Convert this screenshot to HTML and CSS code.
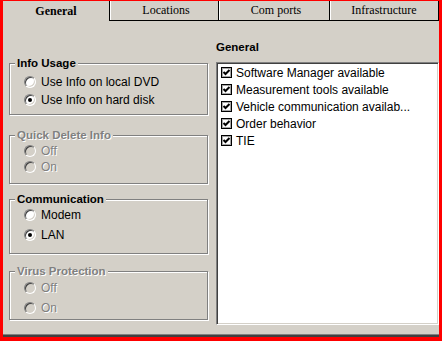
FILE: index.html
```html
<!DOCTYPE html>
<html lang="en">
<head>
    <meta charset="UTF-8">
    <title>Settings - General</title>
    <link rel="stylesheet" href="styles.css">
</head>
<body>
    <div class="frame">
        <div class="tabs">
            <div class="tab active">General</div>
            <div class="tab tab-loc">Locations</div>
            <div class="tab tab-com">Com ports</div>
            <div class="tab tab-infra">Infrastructure</div>
        </div>

        <div class="panel">
            <div class="col-left">
                <fieldset class="group group-info">
                    <legend>Info Usage</legend>
                    <label class="opt"><span class="radio"></span>Use Info on local DVD</label>
                    <label class="opt"><span class="radio checked"></span>Use Info on hard disk</label>
                </fieldset>

                <fieldset class="group group-quick disabled">
                    <legend>Quick Delete Info</legend>
                    <label class="opt"><span class="radio"></span>Off</label>
                    <label class="opt"><span class="radio"></span>On</label>
                </fieldset>

                <fieldset class="group group-comm">
                    <legend>Communication</legend>
                    <label class="opt"><span class="radio"></span>Modem</label>
                    <label class="opt"><span class="radio checked"></span>LAN</label>
                </fieldset>

                <fieldset class="group group-virus disabled">
                    <legend>Virus Protection</legend>
                    <label class="opt"><span class="radio"></span>Off</label>
                    <label class="opt"><span class="radio"></span>On</label>
                </fieldset>
            </div>

            <div class="col-right">
                <div class="list-title">General</div>
                <ul class="list">
                    <li><span class="check"><svg viewBox="0 0 9 9"><polyline points="1.5,4 3.5,6 7.5,2"/></svg></span>Software Manager available</li>
                    <li><span class="check"><svg viewBox="0 0 9 9"><polyline points="1.5,4 3.5,6 7.5,2"/></svg></span>Measurement tools available</li>
                    <li><span class="check"><svg viewBox="0 0 9 9"><polyline points="1.5,4 3.5,6 7.5,2"/></svg></span>Vehicle communication availab...</li>
                    <li><span class="check"><svg viewBox="0 0 9 9"><polyline points="1.5,4 3.5,6 7.5,2"/></svg></span>Order behavior</li>
                    <li><span class="check"><svg viewBox="0 0 9 9"><polyline points="1.5,4 3.5,6 7.5,2"/></svg></span>TIE</li>
                </ul>
            </div>
        </div>
    </div>
</body>
</html>
```

FILE: styles.css
```css
* {
    margin: 0;
    padding: 0;
    box-sizing: border-box;
}

html, body {
    width: 442px;
    height: 341px;
    overflow: hidden;
}

body {
    font-family: "Liberation Sans", Arial, sans-serif;
    font-size: 12px;
    color: #000;
    background: #d4d0c8;
}

.frame {
    width: 442px;
    height: 341px;
    border-style: solid;
    border-color: #f00;
    border-width: 1px 3px 4px 3px;
    background: #d4d0c8;
    display: flex;
    flex-direction: column;
}

/* tabs */
.tabs {
    display: flex;
    height: 20px;
    flex: none;
}

.tab {
    font-family: "Liberation Serif", "Times New Roman", serif;
    font-size: 12px;
    line-height: 19px;
    text-align: center;
    border-left: 1px solid #000;
    border-bottom: 1px solid #000;
    box-shadow: inset 1px 0 #fff;
}

.tab.active {
    width: 106px;
    font-weight: bold;
    line-height: 21px;
    border: none;
    box-shadow: none;
}

.tab-loc { width: 109px; padding-left: 4px; }
.tab-com { width: 111px; padding-left: 4px; }
.tab-infra { width: 110px; border-right: 1px solid #000; }

/* panel */
.panel {
    flex: 1;
    display: flex;
    padding-left: 6px;
    border-bottom: 2px solid #404040;
    box-shadow: inset 0 -1px #808080;
}

.col-left {
    width: 200px;
    padding-top: 35px;
    margin-right: 7px;
}

.group {
    width: 199px;
    border: 1px solid #808080;
    box-shadow: inset 1px 1px #fff, 1px 1px #fff;
}

.group legend {
    font-size: 11.5px;
    font-weight: bold;
    line-height: 14px;
    padding: 0 2px;
    margin-left: 5px;
    background: #d4d0c8;
}

.opt {
    display: flex;
    align-items: center;
    height: 18px;
    padding-left: 14px;
}

.radio {
    flex: none;
    position: relative;
    width: 12px;
    height: 12px;
    margin-right: 5px;
    border-radius: 50%;
    border: 1px solid;
    border-color: #808080 #fff #fff #808080;
    background: #fff;
    box-shadow: inset 1px 1px #404040, inset -1px -1px #d4d0c8;
}

.radio.checked::after {
    content: "";
    position: absolute;
    left: 3px;
    top: 3px;
    width: 4px;
    height: 4px;
    border-radius: 50%;
    background: #000;
}

.disabled legend,
.disabled .opt {
    color: #808080;
    text-shadow: 1px 1px 0 #fff;
}

.disabled .radio {
    background: #d4d0c8;
}

.group-info { padding: 3px 0 5px; }

.group-quick { margin-top: 13px; padding: 1px 0 8px; }
.group-quick .opt { height: 16px; }

.group-comm { margin-top: 8px; padding: 0 0 9px; }
.group-comm .opt + .opt { margin-top: 2px; }

.group-virus { margin-top: 10px; padding: 1px 0 2px; }
.group-virus .opt + .opt { margin-top: 2px; }

/* right list */
.col-right {
    flex: 1;
    padding-top: 19px;
}

.list-title {
    font-size: 11.5px;
    font-weight: bold;
    line-height: 14px;
    margin-bottom: 8px;
}

.list {
    list-style: none;
    height: 263px;
    background: #fff;
    border: 1px solid;
    border-color: #808080 #fff #fff #808080;
    box-shadow: inset 1px 1px #404040, inset -1px -1px #d4d0c8;
    padding: 1px 0 0 4px;
}

.list li {
    display: flex;
    align-items: center;
    height: 17px;
}

.check {
    flex: none;
    width: 11px;
    height: 11px;
    margin-right: 4px;
    border: 1px solid #000;
    box-shadow: inset 0 0 0 1px rgba(0, 0, 0, 0.35);
    background: #fff;
    display: flex;
}

.check svg {
    width: 9px;
    height: 9px;
    fill: none;
    stroke: #000;
    stroke-width: 2;
}
```
